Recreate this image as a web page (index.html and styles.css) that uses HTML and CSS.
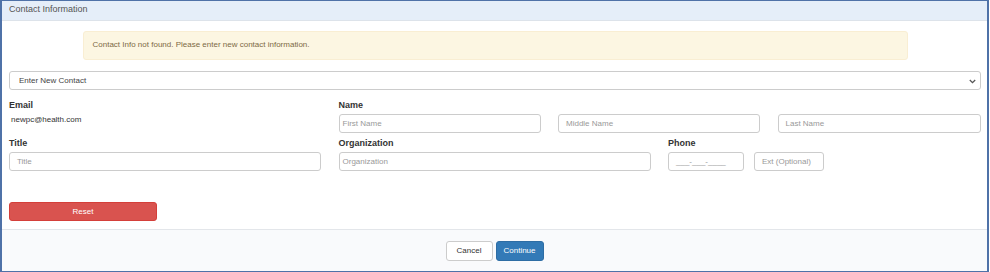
FILE: index.html
```html
<!DOCTYPE html>
<html>
<head>
<meta charset="utf-8">
<link rel="stylesheet" href="styles.css">
</head>
<body>
<div class="panel">
  <div class="panel-heading">Contact Information</div>
  <div class="panel-body">
    <div class="alert">Contact Info not found. Please enter new contact information.</div>
    <div class="select">
      <span>Enter New Contact</span>
      <svg class="chev" width="7" height="5" viewBox="0 0 7 5"><path d="M0.8 1 L3.5 3.7 L6.2 1" fill="none" stroke="#555" stroke-width="1.3"/></svg>
    </div>
    <div class="row row1">
      <div class="field">
        <div class="label">Email</div>
        <div class="value">newpc@health.com</div>
      </div>
      <div class="field span2">
        <div class="label">Name</div>
        <div class="name-grid">
          <div class="input tight">First Name</div>
          <div class="input">Middle Name</div>
          <div class="input">Last Name</div>
        </div>
      </div>
    </div>
    <div class="row row2">
      <div class="field">
        <div class="label">Title</div>
        <div class="input">Title</div>
      </div>
      <div class="field">
        <div class="label">Organization</div>
        <div class="input tight">Organization</div>
      </div>
      <div class="field">
        <div class="label">Phone</div>
        <div class="phone">
          <div class="input phone-num">___-___-____</div>
          <div class="input phone-ext">Ext (Optional)</div>
        </div>
      </div>
    </div>
    <div class="reset">Reset</div>
  </div>
  <div class="panel-footer">
    <div class="btn btn-default">Cancel</div>
    <div class="btn btn-primary">Continue</div>
  </div>
</div>
</body>
</html>
```
FILE: styles.css
```css
html, body {
  margin: 0;
  padding: 0;
  background: #fff;
}
body {
  font-family: "Liberation Sans", Arial, sans-serif;
  font-size: 8px;
  color: #333;
}
.panel {
  box-sizing: border-box;
  width: 989px;
  height: 272px;
  border: 1px solid #4f72a8;
  border-left-width: 2px;
  border-right-width: 2px;
  display: flex;
  flex-direction: column;
}
.panel-heading {
  height: 20px;
  box-sizing: border-box;
  background: #e5eef9;
  border-bottom: 1px solid #dde3ea;
  color: #555;
  font-size: 9px;
  line-height: 17px;
  padding-left: 7px;
}
.panel-body {
  flex: 1;
  padding: 10px 6px 0 7px;
}
.alert {
  box-sizing: border-box;
  width: 825px;
  height: 29px;
  margin: 0 auto;
  background: #fcf6e2;
  border: 1px solid #f9eed3;
  border-radius: 3px;
  color: #7d6a45;
  line-height: 26px;
  padding-left: 9px;
}
.select {
  box-sizing: border-box;
  height: 19px;
  margin-top: 11px;
  border: 1px solid #ccc;
  border-radius: 3px;
  display: flex;
  align-items: center;
  justify-content: space-between;
  padding: 0 4px 0 9px;
  color: #444;
}
.chev { display: block; margin-top: 1px; }
.row {
  display: grid;
  grid-template-columns: 312px 312px 313px;
  column-gap: 17.5px;
}
.row1 { margin-top: 9px; }
.row2 { margin-top: 4px; }
.span2 { grid-column: span 2; }
.label {
  font-size: 9px;
  font-weight: bold;
  line-height: 12px;
  height: 12px;
  margin-bottom: 3px;
  color: #333;
}
.value {
  padding-left: 2px;
  line-height: 12px;
  color: #333;
}
.name-grid {
  display: grid;
  grid-template-columns: 202px 202px 203px;
  column-gap: 17.5px;
}
.input {
  box-sizing: border-box;
  height: 19px;
  border: 1px solid #ccc;
  border-radius: 3px;
  color: #999;
  line-height: 17px;
  padding-left: 7px;
  white-space: nowrap;
}
.input.tight { padding-left: 3px; }
.phone {
  display: flex;
  gap: 10px;
}
.phone-num { width: 76px; }
.phone-ext { width: 70px; }
.reset {
  box-sizing: border-box;
  width: 148px;
  height: 19px;
  margin-top: 31px;
  background: #d9534f;
  border: 1px solid #d43f3a;
  border-radius: 3px;
  color: #fff;
  text-align: center;
  line-height: 17px;
}
.panel-footer {
  box-sizing: border-box;
  height: 42px;
  background: #f9fafc;
  border-top: 1px solid #e3e6ea;
  display: flex;
  justify-content: center;
  align-items: flex-start;
  gap: 3px;
  padding-top: 11px;
}
.btn {
  box-sizing: border-box;
  width: 48px;
  height: 20px;
  border-radius: 3px;
  text-align: center;
  line-height: 18px;
}
.btn-default {
  width: 47px;
  background: #fff;
  border: 1px solid #ccc;
  color: #333;
}
.btn-primary {
  background: #337ab7;
  border: 1px solid #2e6da4;
  color: #fff;
}
```
